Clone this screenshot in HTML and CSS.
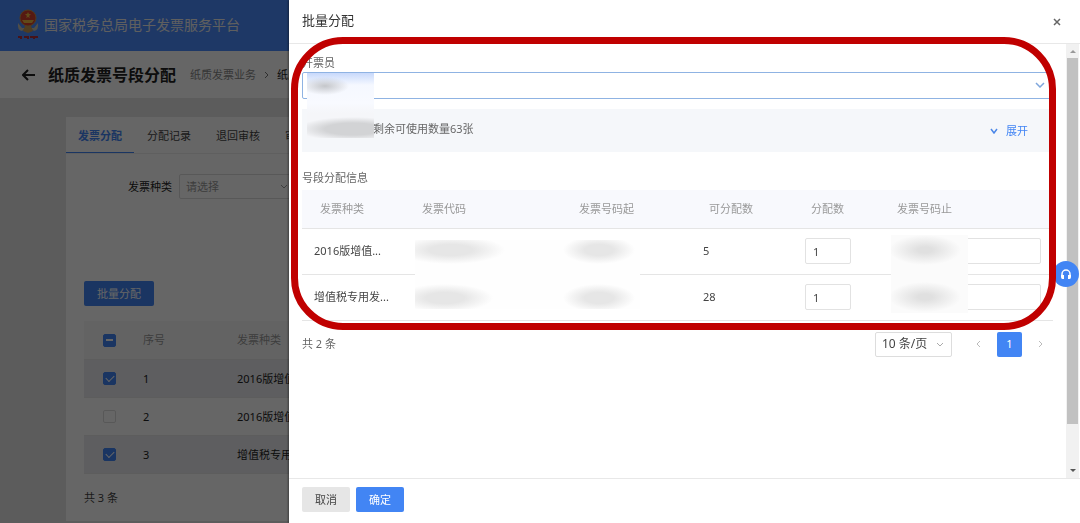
FILE: index.html
```html
<!DOCTYPE html>
<html lang="zh-CN">
<head>
    <meta charset="UTF-8">
    <title>纸质发票号段分配</title>
    <link rel="stylesheet" href="styles.css">
</head>
<body>
<div class="page">
    <header class="top">
        <svg class="emblem" viewBox="0 0 24 32" width="24" height="32">
            <path d="M2 14 Q1 21 6 22 L9 19 L12 22 L15 19 L18 22 Q23 21 22 14 L18 19 L6 19Z" fill="#c9c2b0"/>
            <circle cx="12" cy="9" r="8" fill="#d8402c" stroke="#c89048" stroke-width="1"/>
            <path d="M12 3l1 2 2 0-2 2 1 2-2-1-2 1 1-2-2-2 2 0z" fill="#f0b840"/>
            <path d="M6 11h12l-2 3H8z" fill="#f0b840"/>
            <path d="M9 17h6l2 5-5 2-5-2z" fill="#c89850"/>
            <path d="M2 28h4M5 27v3M8 28h3M12 27v3M14 28h3M18 27v3M19 28h3" stroke="#b03040" stroke-width="2"/>
        </svg>
        <span>国家税务总局电子发票服务平台</span>
    </header>
    <div class="title-bar">
        <a href="#" class="back" aria-label="返回">
            <svg viewBox="0 0 14 12" width="14" height="12"><path d="M6 1L1 6l5 5M1 6h12" fill="none" stroke="#222" stroke-width="2"/></svg>
        </a>
        <h1>纸质发票号段分配</h1>
        <nav class="crumbs">
            <a href="#">纸质发票业务</a>
            <svg viewBox="0 0 5 8" width="5" height="8"><path d="M1 1l3 3-3 3" fill="none" stroke="#777"/></svg>
            <span>纸质发票号段分配</span>
        </nav>
    </div>
    <main class="card">
        <div class="tabs">
            <a href="#" class="active">发票分配</a>
            <a href="#">分配记录</a>
            <a href="#">退回审核</a>
            <a href="#">审核记录</a>
        </div>
        <div class="card-body">
            <div class="filter">
                <label for="kind">发票种类</label>
                <div class="select">
                    <select id="kind"><option>请选择</option></select>
                    <svg viewBox="0 0 8 6" width="8" height="6"><path d="M1 1l3 3 3-3" fill="none" stroke="#999"/></svg>
                </div>
            </div>
            <button class="btn primary batch">批量分配</button>
            <table class="list">
                <thead>
                <tr>
                    <th class="check"><input type="checkbox" class="half" aria-label="全选"></th>
                    <th class="no">序号</th>
                    <th>发票种类</th>
                </tr>
                </thead>
                <tbody>
                <tr class="on">
                    <td class="check"><input type="checkbox" aria-label="选择1" checked></td>
                    <td>1</td>
                    <td>2016版增值税普通发票</td>
                </tr>
                <tr>
                    <td class="check"><input type="checkbox" aria-label="选择2"></td>
                    <td>2</td>
                    <td>2016版增值税普通发票</td>
                </tr>
                <tr class="on">
                    <td class="check"><input type="checkbox" aria-label="选择3" checked></td>
                    <td>3</td>
                    <td>增值税专用发票</td>
                </tr>
                </tbody>
            </table>
            <div class="total">共 3 条</div>
        </div>
    </main>
</div>
<div class="mask"></div>

<section class="drawer">
    <header class="drawer-head">
        <h2>批量分配</h2>
        <button class="close" aria-label="关闭">
            <svg viewBox="0 0 8 8" width="8" height="8"><path d="M1 1l6 6M7 1L1 7" stroke="#666" stroke-width="1.5"/></svg>
        </button>
    </header>
    <div class="drawer-main">
        <div class="drawer-body">
            <label class="label" for="drawer-user">开票员</label>
            <div class="select user">
                <select id="drawer-user"></select>
                <svg viewBox="0 0 10 6" width="10" height="6"><path d="M1 1l4 4 4-4" fill="none" stroke="#7fa6dc" stroke-width="1.5"/></svg>
                <span class="blur blur-user"></span>
            </div>
            <div class="remain">
                <span>剩余可使用数量63张</span>
                <a href="#">
                    <svg viewBox="0 0 8 6" width="8" height="6"><path d="M1 1l3 4 3-4" fill="none" stroke="#4a86e8" stroke-width="1.5"/></svg>
                    展开
                </a>
            </div>
            <div class="label info">号段分配信息</div>
            <div class="grid">
                <table>
                    <colgroup>
                        <col class="c1"><col class="c2"><col class="c3"><col class="c4"><col class="c5"><col>
                    </colgroup>
                    <thead>
                    <tr>
                        <th>发票种类</th>
                        <th>发票代码</th>
                        <th>发票号码起</th>
                        <th>可分配数</th>
                        <th>分配数</th>
                        <th>发票号码止</th>
                    </tr>
                    </thead>
                    <tbody>
                    <tr>
                        <td>2016版增值...</td>
                        <td></td>
                        <td></td>
                        <td>5</td>
                        <td><input class="num" type="text" value="1" aria-label="分配数"></td>
                        <td><input type="text" aria-label="发票号码止"></td>
                    </tr>
                    <tr>
                        <td>增值税专用发...</td>
                        <td></td>
                        <td></td>
                        <td>28</td>
                        <td><input class="num" type="text" value="1" aria-label="分配数"></td>
                        <td><input type="text" aria-label="发票号码止"></td>
                    </tr>
                    </tbody>
                </table>
                <span class="blur blur-code"></span>
                <span class="blur blur-end"></span>
            </div>
            <div class="pager">
                <span class="count">共 2 条</span>
                <div class="select size">
                    <select aria-label="每页条数"><option>10 条/页</option></select>
                    <svg viewBox="0 0 8 6" width="8" height="6"><path d="M1 1l3 3 3-3" fill="none" stroke="#aaa"/></svg>
                </div>
                <button class="arrow" aria-label="上一页">
                    <svg viewBox="0 0 5 8" width="5" height="8"><path d="M4 1L1 4l3 3" fill="none" stroke="#bbb"/></svg>
                </button>
                <button class="current">1</button>
                <button class="arrow" aria-label="下一页">
                    <svg viewBox="0 0 5 8" width="5" height="8"><path d="M1 1l3 3-3 3" fill="none" stroke="#bbb"/></svg>
                </button>
            </div>
        </div>
        <div class="scroll">
            <svg viewBox="0 0 6 3" width="6" height="3"><path d="M0 3l3-3 3 3z" fill="#999"/></svg>
            <div class="thumb"></div>
            <svg viewBox="0 0 6 3" width="6" height="3"><path d="M0 0l3 3 3-3z" fill="#555"/></svg>
        </div>
    </div>
    <footer class="drawer-foot">
        <button class="btn">取消</button>
        <button class="btn primary">确定</button>
    </footer>
    <button class="service" aria-label="客服">
        <svg viewBox="0 0 12 12" width="12" height="12">
            <path d="M2 8V6a4 4 0 0 1 8 0v2" fill="none" stroke="#fff" stroke-width="1.5"/>
            <path d="M1 7h3v4H2.500Q1 11 1 9zM11 7H8v4h1.500Q11 11 11 9z" fill="#fff"/>
        </svg>
    </button>
    <div class="highlight"></div>
</section>
</body>
</html>
```

FILE: styles.css
```css
* {
    margin: 0;
    padding: 0;
    box-sizing: border-box;
}

body {
    font: 11px/16px "Noto Sans", "Noto Sans CJK SC", sans-serif;
    color: #444;
    background: #e6e6e6;
    overflow: hidden;
}

a {
    color: inherit;
    text-decoration: none;
}

button, input, select {
    font: inherit;
    color: inherit;
}

button {
    border: 0;
    background: none;
    cursor: pointer;
}

table {
    width: 100%;
    border-collapse: collapse;
    table-layout: fixed;
}

th, td {
    text-align: left;
    white-space: nowrap;
}

th {
    font-weight: normal;
    color: #999;
}

.page {
    min-height: 100vh;
}

.top {
    display: flex;
    align-items: center;
    gap: 4px;
    height: 51px;
    padding: 0 16px 2px;
    font-size: 14px;
    color: #eee;
    background: #4b8cff;
}

.title-bar {
    display: flex;
    align-items: center;
    height: 47px;
    padding: 0 22px;
    background: #fff;
}

.back {
    display: flex;
    width: 26px;
}

.title-bar h1 {
    margin-right: 14px;
    font-size: 16px;
    line-height: 24px;
    color: #222;
}

.crumbs {
    display: flex;
    align-items: center;
    gap: 8px;
    color: #222;
}

.crumbs a {
    color: #888;
}

.card {
    margin: 19px 0 3px 66px;
    background: #fff;
}

.tabs {
    display: flex;
    gap: 1px;
    height: 37px;
    border-bottom: 1px solid #eee;
}

.tabs a {
    padding: 0 12px;
    line-height: 37px;
    color: #444;
}

.tabs .active {
    color: #4285f4;
    font-weight: bold;
    border-bottom: 1px solid #4285f4;
}

.card-body {
    padding: 20px 18px 15px;
}

.filter {
    display: flex;
    align-items: center;
    gap: 7px;
    padding-left: 44px;
    color: #222;
}

.select {
    position: relative;
    height: 25px;
}

.select select {
    appearance: none;
    width: 100%;
    height: 100%;
    padding: 0 6px;
    border: 1px solid #ddd;
    border-radius: 2px;
    background: #fff;
}

.select svg {
    position: absolute;
    top: 10px;
    right: 8px;
}

.filter .select {
    width: 117px;
    color: #999;
}

.btn {
    height: 25px;
    padding: 0 12px;
    border-radius: 2px;
    background: #e6e6e6;
}

.btn.primary {
    color: #fff;
    background: #4285f4;
}

.batch {
    display: block;
    margin: 82px 0 15px;
    width: 70px;
}

.list {
    color: #222;
}

.list tr {
    height: 38px;
}

.list thead {
    background: #f8f8f8;
}

.list .on {
    background: #ebecf0;
}

.list td, .list th {
    padding-top: 1px;
    border-bottom: 1px solid #e8e8e8;
}

.list .check {
    width: 59px;
    padding-left: 19px;
}

.list .no {
    width: 94px;
}

.list input {
    appearance: none;
    display: flex;
    align-items: center;
    justify-content: center;
    width: 13px;
    height: 13px;
    border: 1px solid #ddd;
    border-radius: 2px;
}

.list input:checked, .list .half {
    border-color: #4285f4;
    background: #4285f4;
}

.list input:checked::before {
    content: "";
    width: 7px;
    height: 4px;
    margin-top: -2px;
    border: solid #fff;
    border-width: 0 0 1px 1px;
    transform: rotate(-45deg);
}

.list .half::before {
    content: "";
    width: 7px;
    height: 2px;
    background: #fff;
}

.total {
    margin-top: 16px;
    color: #444;
}

.mask {
    position: fixed;
    inset: 0;
    background: rgba(0, 0, 0, 0.6);
}

.drawer {
    position: fixed;
    top: 0;
    right: 0;
    bottom: 0;
    left: 289px;
    display: flex;
    flex-direction: column;
    background: #fff;
    box-shadow: -1px 0 2px rgba(0, 0, 0, 0.4);
}

.drawer-head {
    display: flex;
    align-items: center;
    justify-content: space-between;
    height: 44px;
    padding: 0 19px 3px 13px;
    border-bottom: 1px solid #e8e8e8;
}

.drawer-head h2 {
    font-size: 13px;
    font-weight: normal;
    line-height: 20px;
    color: #333;
}

.close {
    display: flex;
    margin-top: 3px;
}

.drawer-main {
    flex: 1;
    display: flex;
    min-height: 0;
    padding-right: 1px;
}

.drawer-body {
    flex: 1;
    padding: 11px 13px;
}

.label {
    display: block;
    margin-bottom: 1px;
    color: #666;
}

.info {
    margin: 18px 0 4px;
}

.user {
    height: 27px;
}

.user select {
    border-color: #8fb3e3;
}

.remain {
    display: flex;
    align-items: center;
    justify-content: space-between;
    height: 43px;
    margin-top: 10px;
    padding: 0 25px 4px 71px;
    color: #666;
    background: #f5f7fa;
}

.remain a {
    display: flex;
    align-items: center;
    gap: 8px;
    margin-top: 4px;
    color: #4285f4;
}

.grid {
    position: relative;
}

.grid th {
    height: 38px;
    padding: 1px 0 0 18px;
    background: #f8f9fd;
}

.grid td {
    height: 46px;
    padding: 0 12px;
}

.grid th, .grid td {
    border-bottom: 1px solid #e5e5e5;
}

.grid input {
    display: block;
    width: 100%;
    height: 26px;
    padding: 0 7px;
    border: 1px solid #e2e2e2;
    border-radius: 2px;
}

.grid .num {
    width: 46px;
}

.c1 {
    width: 102px;
}

.c2 {
    width: 157px;
}

.c3 {
    width: 130px;
}

.c4 {
    width: 102px;
}

.c5 {
    width: 86px;
}

/* smeared personal data */
.blur {
    position: absolute;
}

.blur-user {
    top: 1px;
    left: 5px;
    width: 67px;
    height: 65px;
    background:
        radial-gradient(ellipse 24px 9px at 18px 13px, #c4c6ca, transparent),
        radial-gradient(ellipse 56px 12px at 46px 56px, #d2d3d5 50%, transparent),
        linear-gradient(#c8d9fb, #f5f8ff 12px, #f8faff 30px, #f5f6f9 40px);
}

.blur-code {
    top: 50px;
    left: 113px;
    width: 225px;
    height: 69px;
    background:
        radial-gradient(ellipse 54px 14px at 36px 10px, #e6e6e6 40%, transparent),
        radial-gradient(ellipse 48px 14px at 30px 58px, #e6e6e6 40%, transparent),
        radial-gradient(ellipse 36px 14px at 184px 10px, #e6e6e6 40%, transparent),
        radial-gradient(ellipse 36px 14px at 184px 58px, #e6e6e6 40%, transparent),
        #fefefe;
}

.blur-end {
    top: 45px;
    left: 589px;
    width: 77px;
    height: 78px;
    background:
        radial-gradient(ellipse 36px 15px at 34px 15px, #e0e0e0 20%, transparent),
        radial-gradient(ellipse 36px 15px at 34px 62px, #e0e0e0 20%, transparent),
        #fbfbfb;
}

.pager {
    display: flex;
    align-items: center;
    margin-top: 11px;
    color: #666;
}

.count {
    flex: 1;
}

.size {
    width: 77px;
    margin-right: 14px;
    font-size: 12px;
    color: #444;
}

.pager button {
    display: flex;
    align-items: center;
    justify-content: center;
    width: 25px;
    height: 25px;
    margin-left: 6px;
    border-radius: 2px;
}

.pager .arrow:first-of-type {
    margin-left: 0;
}

.pager .current {
    color: #fff;
    background: #4285f4;
}

.scroll {
    display: flex;
    flex-direction: column;
    align-items: center;
    gap: 5px;
    width: 13px;
    padding: 6px 0;
    background: #f1f1f1;
}

.thumb {
    width: 11px;
    flex: 1;
    margin-bottom: 40px;
    background: #c1c1c1;
}

.drawer-foot {
    display: flex;
    gap: 6px;
    height: 45px;
    padding: 8px 13px;
    border-top: 1px solid #e8e8e8;
}

.drawer-foot .btn {
    width: 48px;
}

.service {
    position: absolute;
    top: 261px;
    right: 1px;
    display: flex;
    align-items: center;
    justify-content: center;
    width: 26px;
    height: 26px;
    border-radius: 50%;
    background: #4285f4;
}

.highlight {
    position: absolute;
    top: 37px;
    left: 2px;
    right: 24px;
    height: 293px;
    border: 7px solid #c00000;
    border-radius: 52px;
    pointer-events: none;
}
```
